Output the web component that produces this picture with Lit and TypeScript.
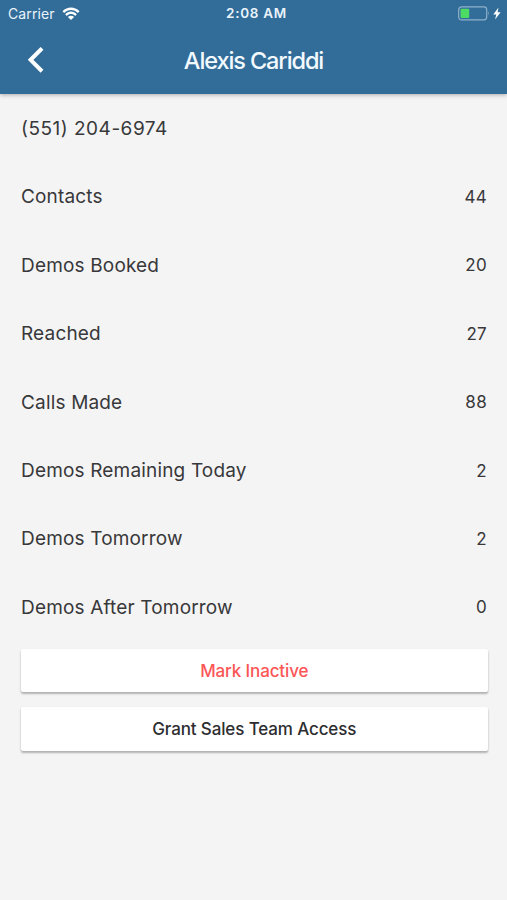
import { LitElement, html, css } from "lit";
import { customElement, property } from "lit/decorators.js";

@customElement("status-bar")
class StatusBar extends LitElement {
  static styles = css`
    :host {
      display: grid;
      grid-template-columns: 1fr auto 1fr;
      align-items: center;
      height: 27px;
      padding: 0 6px 0 8px;
      color: #eaf3fa;
      font-size: 14px;
      line-height: 27px;
    }
    .carrier { display: flex; align-items: center; gap: 7px; letter-spacing: 0.12px; }
    .time { font-weight: 600; font-size: 13.5px; letter-spacing: 0.7px; padding-left: 4px; }
    .power { display: flex; align-items: center; justify-content: flex-end; gap: 3px; }
    svg { display: block; }
  `;
  render() {
    return html`
      <div class="carrier">
        <span>Carrier</span>
        <svg width="18" height="13" viewBox="0 0 18 13" fill="#fff">
          <path d="M.5 4.3C5.2-.7 12.8-.7 17.5 4.3L15.9 6C12 1.9 6 1.9 2.1 6Z" />
          <path d="M3.2 7.2C6.5 3.7 11.5 3.7 14.8 7.2L13.2 8.9C10.8 6.4 7.2 6.4 4.8 8.9Z" />
          <path d="M5.9 10C7.7 8.2 10.3 8.2 12.1 10L9 13Z" />
        </svg>
      </div>
      <div class="time">2:08 AM</div>
      <div class="power">
        <svg width="32" height="15" viewBox="0 0 32 15">
          <rect x="0.7" y="0.9" width="28" height="13" rx="2.8" fill="none" stroke="#8fb1cb" stroke-width="1.2" />
          <rect x="2.6" y="2.8" width="8.6" height="9.2" rx="1" fill="#4cdc64" />
          <path d="M30 5.2Q31.8 7.4 30 9.6Z" fill="#8fb1cb" />
        </svg>
        <svg width="8" height="13" viewBox="0 0 8 13"><path d="M5.5.5L.3 7.5H3.3L2.1 12.5L7.6 5.3H4.6Z" fill="#fff" /></svg>
      </div>
    `;
  }
}

@customElement("stat-row")
class StatRow extends LitElement {
  @property() label = "";
  @property() value = "";
  static styles = css`
    :host {
      display: flex;
      align-items: center;
      justify-content: space-between;
      height: 68.4px;
      padding: 0 20px 0 21px;
      color: #38383a;
    }
    .label { font-size: 19px; letter-spacing: 0.17px; }
    .phone { font-size: 19px; letter-spacing: 0.5px; }
    .value { font-size: 17px; letter-spacing: 0.3px; }
  `;
  render() {
    return this.value
      ? html`<span class="label">${this.label}</span><span class="value">${this.value}</span>`
      : html`<span class="phone">${this.label}</span>`;
  }
}

const stats = [
  ["(551) 204-6974", ""],
  ["Contacts", "44"],
  ["Demos Booked", "20"],
  ["Reached", "27"],
  ["Calls Made", "88"],
  ["Demos Remaining Today", "2"],
  ["Demos Tomorrow", "2"],
  ["Demos After Tomorrow", "0"],
];

@customElement("app-root")
class AppRoot extends LitElement {
  static styles = css`
    :host {
      display: block;
      height: 900px;
      background: #f4f4f4;
      font-family: Inter, "Liberation Sans", sans-serif;
      overflow: hidden;
    }
    header {
      height: 94px;
      background: #326d99;
      box-shadow: 0 1px 4px rgba(0, 0, 0, 0.3);
    }
    main { padding-top: 0.4px; }
    .nav {
      display: grid;
      grid-template-columns: 70px 1fr 70px;
      align-items: center;
      height: 66px;
    }
    .back { display: block; margin-left: 27px; }
    h1 {
      margin: 0;
      color: #f3faff;
      font-size: 23.5px;
      font-weight: 500;
      letter-spacing: -1.1px;
      text-align: center;
    }
    .actions {
      display: flex;
      flex-direction: column;
      gap: 15px;
      padding: 7.3px 19px 0 20.5px;
    }
    button {
      height: 43.5px;
      padding: 0;
      border: 0;
      border-radius: 2px;
      background: #fff;
      color: #2d2d2f;
      font: 500 17px Inter, "Liberation Sans", sans-serif;
      letter-spacing: -0.13px;
      box-shadow: 0 2px 2px rgba(0, 0, 0, 0.24), 0 1px 3px rgba(0, 0, 0, 0.08);
    }
    .danger { color: #fc5556; }
  `;
  render() {
    return html`
      <header>
        <status-bar></status-bar>
        <div class="nav">
          <svg class="back" width="17" height="26" viewBox="0 0 17 26">
            <path d="M13.6 2.8L3.6 12.8L13.6 22.8" fill="none" stroke="#fff" stroke-width="4" stroke-linecap="square" />
          </svg>
          <h1>Alexis Cariddi</h1>
        </div>
      </header>
      <main>
        ${stats.map(([label, value]) => html`<stat-row .label=${label} .value=${value}></stat-row>`)}
        <div class="actions">
          <button class="danger">Mark Inactive</button>
          <button>Grant Sales Team Access</button>
        </div>
      </main>
    `;
  }
}
